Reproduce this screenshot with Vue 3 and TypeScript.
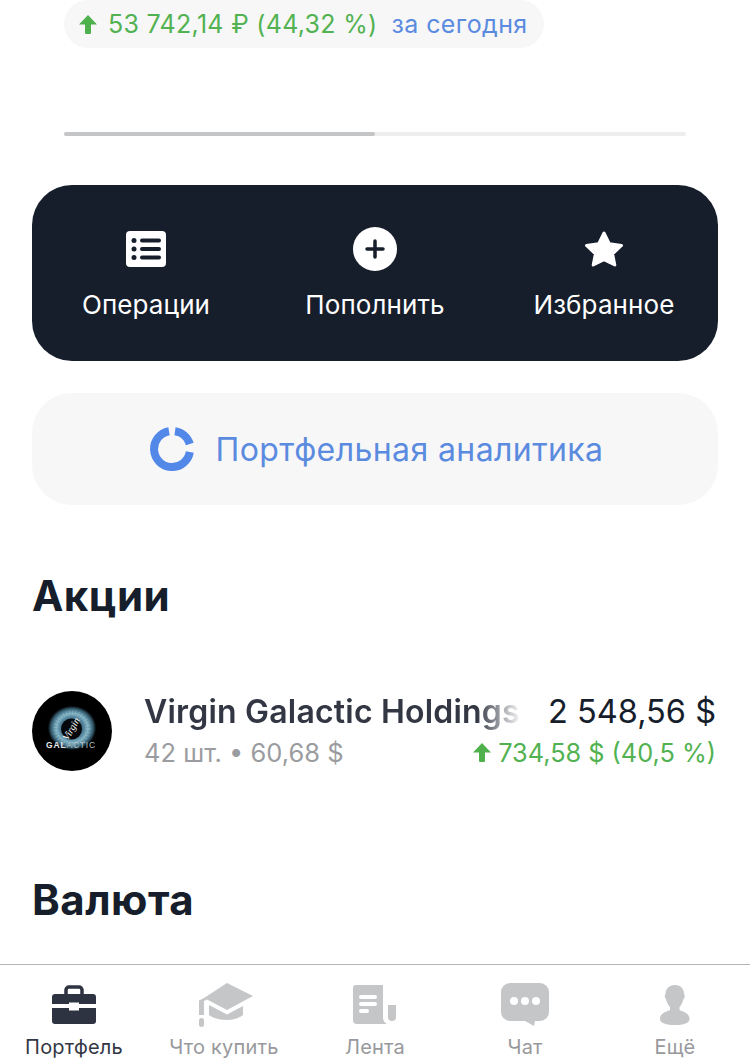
<template>
  <div class="screen">
    <main class="content">
      <div class="change-wrap">
        <div class="change-pill">
          <svg class="arrow" width="18" height="19" viewBox="0 0 18 19"><path d="M9 0 18 9.500h-6V18a1 1 0 0 1-1 1H7a1 1 0 0 1-1-1V9.500H0z" fill="#4fb14c" /></svg>
          <span class="change-value">53 742,14 ₽ (44,32 %)</span>
          <span class="change-period">за сегодня</span>
        </div>
      </div>

      <div class="progress">
        <div class="progress-fill" :style="{ width: `${progress}%` }"></div>
      </div>

      <section class="actions">
        <div class="action">
          <svg width="40" height="36" viewBox="0 0 40 36">
            <rect width="40" height="36" rx="4" fill="#fff" />
            <circle cx="8" cy="9.500" r="2.500" fill="#161e2c" />
            <circle cx="8" cy="18" r="2.500" fill="#161e2c" />
            <circle cx="8" cy="26.500" r="2.500" fill="#161e2c" />
            <rect x="14" y="7.500" width="21" height="4" rx="2" fill="#161e2c" />
            <rect x="14" y="16" width="21" height="4" rx="2" fill="#161e2c" />
            <rect x="14" y="24.500" width="21" height="4" rx="2" fill="#161e2c" />
          </svg>
          <span>Операции</span>
        </div>
        <div class="action">
          <svg width="44" height="44" viewBox="0 0 44 44">
            <circle cx="22" cy="22" r="22" fill="#fff" />
            <path d="M22 14v16M14 22h16" stroke="#161e2c" stroke-width="3.500" stroke-linecap="round" />
          </svg>
          <span>Пополнить</span>
        </div>
        <div class="action">
          <svg width="40" height="38" viewBox="0 0 40 38">
            <path d="M20 3 25.400 13.800 37.500 15.500 28.600 23.800 30.800 35 20 29.600 9.200 35 11.400 23.800 2.500 15.500 14.600 13.800z" fill="#fff" stroke="#fff" stroke-width="3" stroke-linejoin="round" />
          </svg>
          <span>Избранное</span>
        </div>
      </section>

      <section class="analytics">
        <svg width="44" height="44" viewBox="0 0 44 44" fill="none" stroke="#5288e8" stroke-width="8">
          <path d="M19 4.300A18 18 0 1 0 39.800 25" />
          <path d="M25 4.300A18 18 0 0 1 39.800 17" />
        </svg>
        <span>Портфельная аналитика</span>
      </section>

      <h2 class="section-title stocks-title">Акции</h2>

      <div class="position">
        <svg class="logo" width="80" height="80" viewBox="0 0 80 80">
          <defs>
            <radialGradient id="iris">
              <stop offset="0" stop-color="#1a2a33" />
              <stop offset="0.42" stop-color="#3f6f86" />
              <stop offset="0.66" stop-color="#7fb0c2" />
              <stop offset="0.86" stop-color="#3a6478" />
              <stop offset="1" stop-color="#05080a" />
            </radialGradient>
          </defs>
          <circle cx="40" cy="40" r="40" fill="#000" />
          <ellipse cx="40" cy="37" rx="24" ry="22" fill="url(#iris)" />
          <circle cx="40" cy="38" r="16" fill="none" stroke="#a9d0de" stroke-width="5" stroke-dasharray="1 2" opacity="0.35" />
          <circle cx="39.500" cy="38" r="10.500" fill="#05070a" />
          <text x="39.500" y="41" class="logo-virgin" transform="rotate(-60 39.500 38)">Virgin</text>
          <text x="39" y="57" class="logo-galactic">GAL<tspan class="logo-thin">ACTIC</tspan></text>
        </svg>
        <div class="position-info">
          <div class="position-line">
            <span class="position-name">Virgin Galactic Holdings</span>
            <span class="position-total">2 548,56 $</span>
          </div>
          <div class="position-line">
            <span class="position-count">42 шт. • 60,68 $</span>
            <span class="position-yield">
              <svg width="18" height="19" viewBox="0 0 18 19"><path d="M9 0 18 9.500h-6V18a1 1 0 0 1-1 1H7a1 1 0 0 1-1-1V9.500H0z" fill="#4fb14c" /></svg>
              734,58 $ (40,5 %)
            </span>
          </div>
        </div>
      </div>

      <h2 class="section-title currency-title">Валюта</h2>
    </main>

    <nav class="tabbar">
      <div v-for="tab in tabs" :key="tab.label" class="tab" :class="{ active: tab.active }">
        <svg v-if="tab.icon === 'case'" width="46" height="40" viewBox="0 0 46 40">
          <path d="M15 9V5a3 3 0 0 1 3-3h10a3 3 0 0 1 3 3v4" fill="none" stroke="#2e3341" stroke-width="3.500" />
          <path d="M1 12a3 3 0 0 1 3-3h38a3 3 0 0 1 3 3v7H28v-1.500h-10V19H1z" fill="#2e3341" />
          <path d="M1 23h17v2.500h10V23h17v13a3 3 0 0 1-3 3H4a3 3 0 0 1-3-3z" fill="#2e3341" />
        </svg>
        <svg v-else-if="tab.icon === 'cap'" width="54" height="44" viewBox="0 0 54 44" class="cap">
          <path d="M28 0 54 13 28 27 8 16.500 5 18v-3z" fill="#c5c6c8" />
          <path d="M0 17.500 5 15v17H0z" fill="#c5c6c8" />
          <rect x="0" y="35" width="5" height="9" rx="2.500" fill="#c5c6c8" />
          <path d="M10 22 28 31.500 44 23v9c-4 3-10 5-16 5-7 0-14-2-18-5z" fill="#c5c6c8" />
        </svg>
        <svg v-else-if="tab.icon === 'news'" width="44" height="40" viewBox="0 0 44 40">
          <path d="M3 0h27v33c0 3 2 5 4 6H4a4 4 0 0 1-4-4V3a3 3 0 0 1 3-3z" fill="#c5c6c8" />
          <rect x="6" y="10" width="18" height="4" rx="2" fill="#fff" />
          <rect x="6" y="17" width="18" height="4" rx="2" fill="#fff" />
          <rect x="6" y="24" width="10" height="4" rx="2" fill="#fff" />
          <path d="M35 20h8v12a4 4 0 0 1-8 0z" fill="#c5c6c8" />
        </svg>
        <svg v-else-if="tab.icon === 'chat'" width="48" height="44" viewBox="0 0 48 44">
          <path d="M9 0h30a9 9 0 0 1 9 9v20a9 9 0 0 1-9 9h-5l-1 5-9-5H9a9 9 0 0 1-9-9V9a9 9 0 0 1 9-9z" fill="#c5c6c8" />
          <circle cx="13" cy="18" r="4" fill="#fff" />
          <circle cx="24" cy="18" r="4" fill="#fff" />
          <circle cx="35" cy="18" r="4" fill="#fff" />
        </svg>
        <svg v-else width="30" height="40" viewBox="0 0 30 40">
          <path d="M15 0c6 0 9 4 9 9 1 1 1 4-.500 5-1 4-3 7-4 8v3c4 2 10 3 10 9 0 4-6 6-14.500 6S0 38 0 34c0-6 6-7 10-9v-3c-1-1-3-4-4-8-1.500-1-1.500-4-.500-5 0-5 3.500-9 9.500-9z" fill="#c5c6c8" />
        </svg>
        <span>{{ tab.label }}</span>
      </div>
    </nav>
  </div>
</template>

<script setup lang="ts">
interface Tab {
  label: string
  icon: string
  active?: boolean
}

const progress = 50

const tabs: Tab[] = [
  { label: 'Портфель', icon: 'case', active: true },
  { label: 'Что купить', icon: 'cap' },
  { label: 'Лента', icon: 'news' },
  { label: 'Чат', icon: 'chat' },
  { label: 'Ещё', icon: 'user' }
]
</script>

<style>
body {
  background: #fff;
}
</style>

<style scoped>
.screen {
  width: 750px;
  height: 1063px;
  display: flex;
  flex-direction: column;
  overflow: hidden;
  background: #fff;
  font-family: Inter, "Noto Sans", "Liberation Sans", sans-serif;
}

.content {
  flex: 1;
  min-height: 0;
  padding: 0 32px;
}

.change-wrap {
  padding-left: 32px;
}

.change-pill {
  width: 480px;
  height: 48px;
  box-sizing: border-box;
  padding: 0 0 0 15px;
  display: flex;
  align-items: center;
  gap: 11px;
  border-radius: 24px;
  background: #f7f7f8;
  font-size: 25px;
  letter-spacing: 0.3px;
  white-space: nowrap;
}

.arrow {
  flex: none;
}

.change-value {
  color: #52b251;
  margin-right: 3px;
}

.change-period {
  color: #5b8bdf;
  letter-spacing: 0.4px;
}

.progress {
  margin: 84px 0 0 32px;
  width: 622px;
  height: 4px;
  border-radius: 2px;
  background: #eeeeef;
}

.progress-fill {
  height: 100%;
  border-radius: 2px;
  background: #c4c5c7;
}

.actions {
  margin-top: 49px;
  height: 176px;
  display: grid;
  grid-template-columns: 228px 230px 228px;
  border-radius: 40px;
  background: #161e2c;
  color: #fff;
}

.action {
  display: flex;
  flex-direction: column;
  align-items: center;
  padding-top: 42px;
  font-size: 26px;
  letter-spacing: 0.1px;
}

.action svg {
  height: 44px;
  margin-bottom: 18px;
}

.analytics {
  margin-top: 32px;
  height: 112px;
  display: flex;
  align-items: center;
  justify-content: center;
  gap: 22px;
  padding-left: 3px;
  border-radius: 40px;
  background: #f7f7f8;
  color: #5b8bdf;
  font-size: 32px;
  letter-spacing: 0.4px;
}

.section-title {
  margin: 0;
  color: #161e2c;
  font-size: 42px;
  line-height: 52px;
  font-weight: 700;
  letter-spacing: 0.5px;
}

.stocks-title {
  margin-top: 65px;
}

.position {
  margin-top: 69px;
  display: flex;
  align-items: center;
  gap: 32px;
}

.logo {
  flex: none;
}

.logo-virgin {
  fill: #fff;
  font-family: "Liberation Serif", serif;
  font-style: italic;
  font-size: 10px;
  text-anchor: middle;
}

.logo-galactic {
  fill: #e4e9ec;
  font-family: "Liberation Sans", sans-serif;
  font-size: 8.500px;
  font-weight: 700;
  letter-spacing: 0.8px;
  text-anchor: middle;
}

.logo-thin {
  font-weight: 400;
  fill: #b4c2c9;
}

.position-info {
  flex: 1;
  min-width: 0;
  display: flex;
  flex-direction: column;
  gap: 7px;
  padding: 0 2px 2px 0;
}

.position-line {
  display: flex;
  justify-content: space-between;
  align-items: center;
  white-space: nowrap;
}

.position-name {
  width: 378px;
  overflow: hidden;
  color: #333744;
  font-size: 32px;
  line-height: 38px;
  font-weight: 600;
  letter-spacing: 0.2px;
  -webkit-mask-image: linear-gradient(to right, #000 88%, transparent 100%);
  mask-image: linear-gradient(to right, #000 88%, transparent 100%);
}

.position-total {
  color: #161e2c;
  font-size: 32.500px;
  line-height: 38px;
}

.position-count {
  color: #9b9ca0;
  font-size: 25.500px;
  line-height: 30px;
}

.position-yield {
  display: flex;
  align-items: center;
  gap: 7px;
  color: #52b251;
  font-size: 25.300px;
  line-height: 30px;
}

.currency-title {
  margin-top: 103px;
}

.tabbar {
  flex: none;
  height: 99px;
  box-sizing: border-box;
  display: grid;
  grid-template-columns: 148px 152px 150px 150px 150px;
  border-top: 1px solid #b5b5b7;
  background: #fff;
}

.tab {
  display: flex;
  flex-direction: column;
  align-items: center;
  padding-top: 18px;
  color: #98999c;
  font-size: 20px;
  letter-spacing: 0.2px;
  white-space: nowrap;
}

.tab svg {
  height: 44px;
  margin-bottom: 8px;
}

.tab svg.cap {
  margin-left: 3px;
}

.tab.active {
  color: #333744;
}
</style>
